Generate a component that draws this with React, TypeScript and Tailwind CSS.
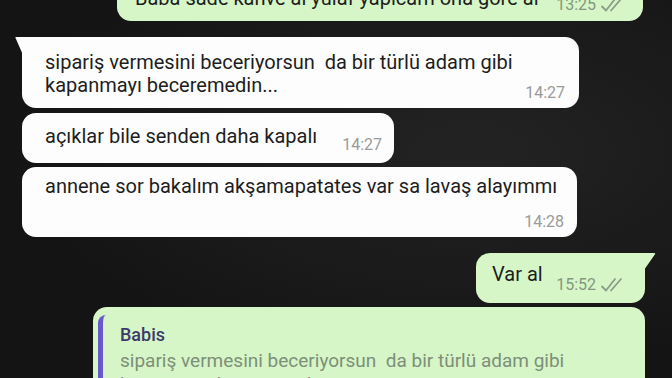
import React from "react";

function Checks() {
  return (
    <svg width="28" height="16" viewBox="0 0 28 16" fill="none" className="shrink-0">
      <path d="M2 9.5 L6 13.5 L15 2" stroke="#8b9d87" strokeWidth="1.8" strokeLinecap="round" strokeLinejoin="round" />
      <path d="M11 13.5 L21 2" stroke="#8b9d87" strokeWidth="1.8" strokeLinecap="round" strokeLinejoin="round" />
    </svg>
  );
}

export default function App() {
  return (
    <div className="w-[672px] h-[378px] overflow-hidden bg-[radial-gradient(ellipse_at_70%_40%,#232323,#141414_70%)] flex flex-col font-[Roboto,sans-serif] text-[#1d1d1d]">
      {/* top outgoing bubble (cut off) */}
      <div className="self-end mr-[29px] w-[526px] h-[43px] -mt-[22px] shrink-0 bg-[#d6f6c8] rounded-[14px] flex items-end justify-between pl-[18px] pr-[15px] pb-[7px]">
        <div className="text-[20px] leading-[23px] mb-[4px]">Baba sade kahve al yulaf yapıcam ona göre al</div>
        <div className="flex items-center gap-[4px] text-[16px] leading-[18px] text-[#84967f]">
          <span>13:25</span>
          <Checks />
        </div>
      </div>

      {/* bubble 1 */}
      <div className="relative ml-[22px] mt-[16px] w-[557px] shrink-0 bg-[#fdfdfd] rounded-[14px] rounded-tl-none flex items-end justify-between pl-[23px] pr-[14px] pt-[14px] pb-[6px]">
        <svg className="absolute -left-[7px] top-0" width="8" height="18" viewBox="0 0 8 18">
          <path d="M8 0 L1.5 0 Q-0.5 0 0.8 1.6 L8 18 Z" fill="#fdfdfd" />
        </svg>
        <div className="text-[20px] leading-[23px] mb-[5px] whitespace-pre">
          {"sipariş vermesini beceriyorsun  da bir türlü adam gibi\nkapanmayı beceremedin..."}
        </div>
        <div className="text-[16px] leading-[18px] text-[#9a9a9a]">14:27</div>
      </div>

      {/* bubble 2 */}
      <div className="ml-[22px] mt-[5px] w-[372px] shrink-0 bg-[#fdfdfd] rounded-[14px] flex items-end justify-between pl-[23px] pr-[12px] pt-[12px] pb-[9px]">
        <div className="text-[20px] leading-[23px] mb-[6px]">açıklar bile senden daha kapalı</div>
        <div className="text-[16px] leading-[18px] text-[#9a9a9a]">14:27</div>
      </div>

      {/* bubble 3 */}
      <div className="ml-[22px] mt-[4px] w-[555px] shrink-0 bg-[#fdfdfd] rounded-[14px] flex flex-col pl-[23px] pr-[13px] pt-[8px] pb-[6px]">
        <div className="text-[20px] leading-[23px]">annene sor bakalım akşamapatates var sa lavaş alayımmı</div>
        <div className="self-end mt-[15px] text-[16px] leading-[18px] text-[#9a9a9a]">14:28</div>
      </div>

      {/* Var al */}
      <div className="relative self-end mr-[27px] mt-[16px] w-[169px] shrink-0 bg-[#d6f6c8] rounded-[14px] rounded-tr-none flex items-end justify-between pl-[16px] pr-[17px] pt-[10px] pb-[9px]">
        <svg className="absolute -right-[11px] top-0" width="12" height="17" viewBox="0 0 12 17">
          <path d="M0 0 L10 0 Q12 0 10.8 1.6 L0 17 Z" fill="#d6f6c8" />
        </svg>
        <div className="text-[20px] leading-[23px] mb-[8px]">Var al</div>
        <div className="flex items-center gap-[4px] text-[16px] leading-[18px] text-[#84967f]">
          <span>15:52</span>
          <Checks />
        </div>
      </div>

      {/* quoted reply bubble */}
      <div className="self-end mr-[27px] mt-[4px] w-[552px] shrink-0 bg-[#d6f6c8] rounded-[14px] pl-[5px] pr-[12px] pt-[8px] h-[120px]">
        <div className="border-l-[5px] border-[#6a58cc] rounded-tl-[8px] pl-[17px] pt-[8px]">
          <div className="text-[18px] leading-[24px] font-medium text-[#3c3a6a]">Babis</div>
          <div className="mt-[2px] text-[19px] leading-[24px] text-[#7d8f79] whitespace-pre">
            {"sipariş vermesini beceriyorsun  da bir türlü adam gibi\nkapanmayı beceremedin..."}
          </div>
        </div>
      </div>
    </div>
  );
}
